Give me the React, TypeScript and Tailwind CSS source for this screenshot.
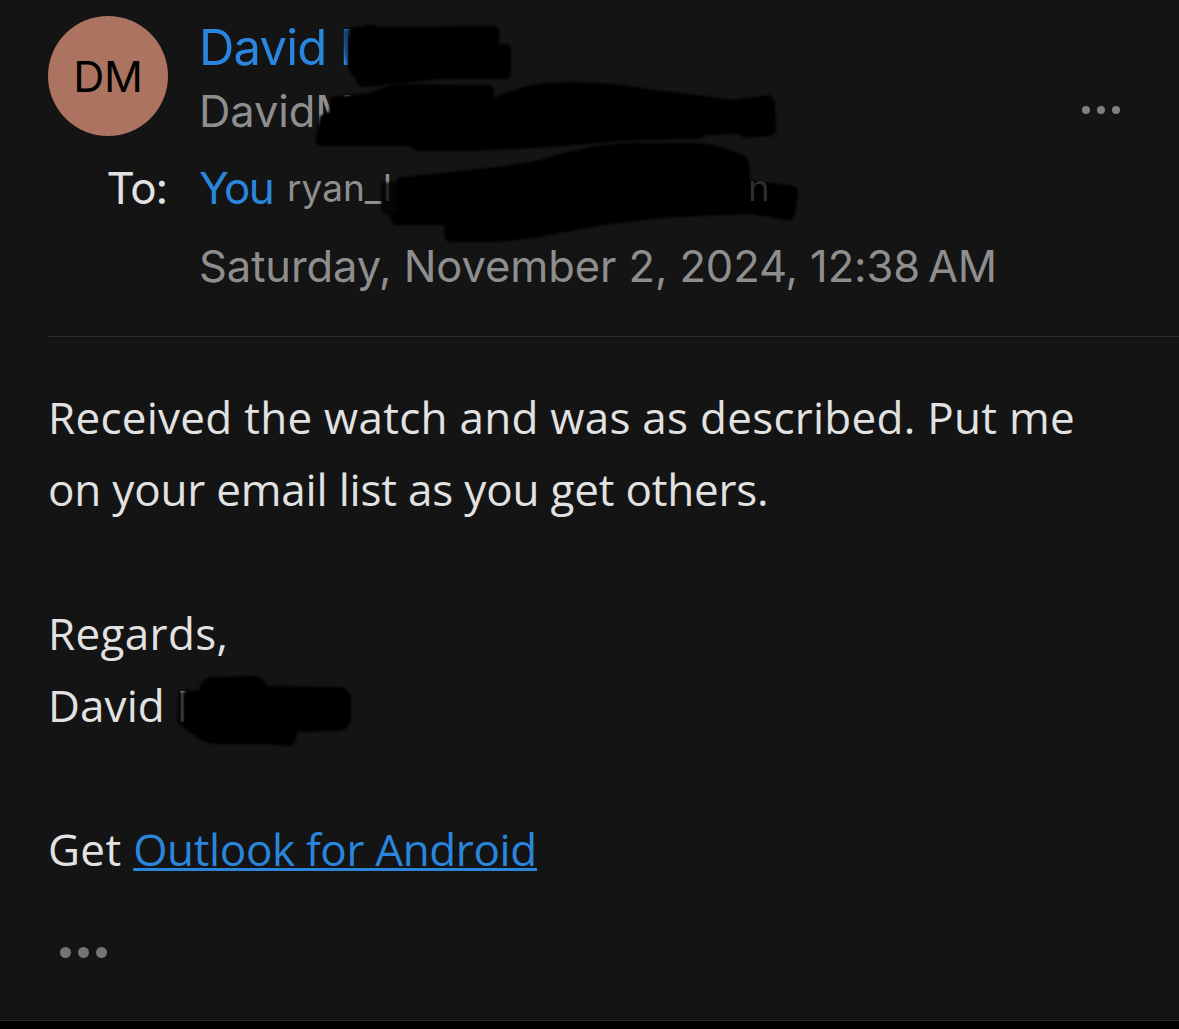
import clsx from "clsx";

export default function App() {
  return (
    <div className="relative flex h-[1029px] w-[1179px] flex-col overflow-hidden bg-black">
      <div className="flex flex-1 flex-col border-b border-[#2b2b2b] bg-[#141414]">
        <MessageHeader />
        <MessageBody />
      </div>
      <div className="h-2 shrink-0" />
      <MarkerStrokes />
    </div>
  );
}

function MessageHeader() {
  return (
    <header className="ml-12 flex h-[337px] shrink-0 border-b border-[#2b2b2b] font-['Inter',sans-serif] text-[#8e8e8e]">
      <div className="flex w-[151px] shrink-0 flex-col pt-4">
        <div className="flex size-[120px] items-center justify-center rounded-full bg-[#ac7460] text-[43px] leading-none tracking-[-0.2px] text-black">
          DM
        </div>
        <span className="mt-2 mr-[32px] text-right text-[44px] leading-[88px] tracking-[-1.2px] text-[#e2e2e2]">
          To:
        </span>
      </div>
      <div className="flex flex-1 flex-col pt-[18px] whitespace-nowrap">
        <span className="text-[49px] leading-[60px] tracking-[-0.8px] text-[#2a86dd]">David M</span>
        <span className="text-[43.5px] leading-[66px] tracking-[-0.1px]">DavidM</span>
        <div className="flex items-center leading-[88px]">
          <span className="mr-[14px] text-[44px] tracking-[-1.6px] text-[#2a86dd]">You</span>
          <span className="text-[37px]">ryan_l</span>
        </div>
        <span className="text-[43.5px] leading-[69px] tracking-[-0.1px]">
          Saturday, November 2, 2024, 12:38&#8239;AM
        </span>
      </div>
      <button aria-label="More actions" className="mt-[106px] mr-[59px] self-start">
        <Dots size="sm" />
      </button>
    </header>
  );
}

function MessageBody() {
  return (
    <main className="flex flex-col pt-11 pl-12 font-['Open_Sans',sans-serif] text-[44px] leading-[72px] whitespace-nowrap text-[#e2e2e2]">
      <p className="tracking-[0.27px]">Received the watch and was as described. Put me</p>
      <p className="tracking-[-0.19px]">on your email list as you get others.</p>
      <p className="mt-[72px] tracking-[0.35px]">Regards,</p>
      <p className="tracking-[0.1px]">David M</p>
      <p className="mt-[72px] tracking-[0.35px]">
        Get{" "}
        <a className="tracking-[-0.35px] text-[#2a86dd] underline decoration-[3px] underline-offset-[2px]">
          Outlook for Android
        </a>
      </p>
      <button aria-label="Show quoted text" className="mt-[62px] ml-3 self-start">
        <Dots size="lg" />
      </button>
    </main>
  );
}

function Dots({ size }: { size: "sm" | "lg" }) {
  const dot = clsx("rounded-full", size === "sm" ? "size-2 bg-[#808080]" : "size-[11px] bg-[#747474]");
  return (
    <span className="flex gap-[7px]">
      <span className={dot} />
      <span className={dot} />
      <span className={dot} />
    </span>
  );
}

// Marker strokes over the private parts of the message
function MarkerStrokes() {
  return (
    <svg className="pointer-events-none absolute inset-0" width="1179" height="1029" viewBox="0 0 1179 1029">
      <defs>
        <filter id="soft" x="-5%" y="-5%" width="110%" height="110%">
          <feGaussianBlur stdDeviation="1" />
        </filter>
      </defs>
      <g filter="url(#soft)">
        <path opacity=".5" d="M343 30L360 27V74L350 74Q344 60 343 30Z" />
        <path d="M349 29L372 24L378 27L494 26Q499 27 499 32V44H506Q511 45 511 50V74Q511 78 506 79L440 79L365 87Q357 86 356 80L349 70Z" />
        <path d="M331 97L370 93Q385 86 398 84L490 85Q494 86 494 98Q520 86 545 83Q595 80 640 88L735 100L768 95Q774 96 775 104L776 130Q776 135 770 136L745 138L738 134L706 135Q702 140 690 139L620 141Q520 151 440 151H420Q412 151 410 146H321Q315 145 316 139L320 116L329 112Z" />
        <path opacity=".75" d="M381 183L400 181V215L386 215Q380 213 381 206Z" />
        <path d="M397 178L440 173Q500 168 540 160Q590 144 630 143L700 143Q722 145 746 157Q750 160 750 180L793 186Q798 187 798 193L795 215Q793 221 786 220L752 214L700 216Q640 218 580 229Q530 240 495 242H452Q445 242 444 235V225L396 225Q390 224 391 215L397 212Z" />
        <path opacity=".75" d="M178 693L190 688V727L182 727Q176 724 177 715Z" />
        <path d="M184 692L200 690Q198 682 210 677L256 676Q265 680 266 686L338 687Q350 688 351 698V718Q350 730 338 731L297 732Q296 747 287 746L270 744H215Q203 742 198 738L184 728Z" />
      </g>
      <text x="748" y="201" className="fill-[#2c2c2c] font-['Inter',sans-serif] text-[37px]">
        n
      </text>
    </svg>
  );
}
